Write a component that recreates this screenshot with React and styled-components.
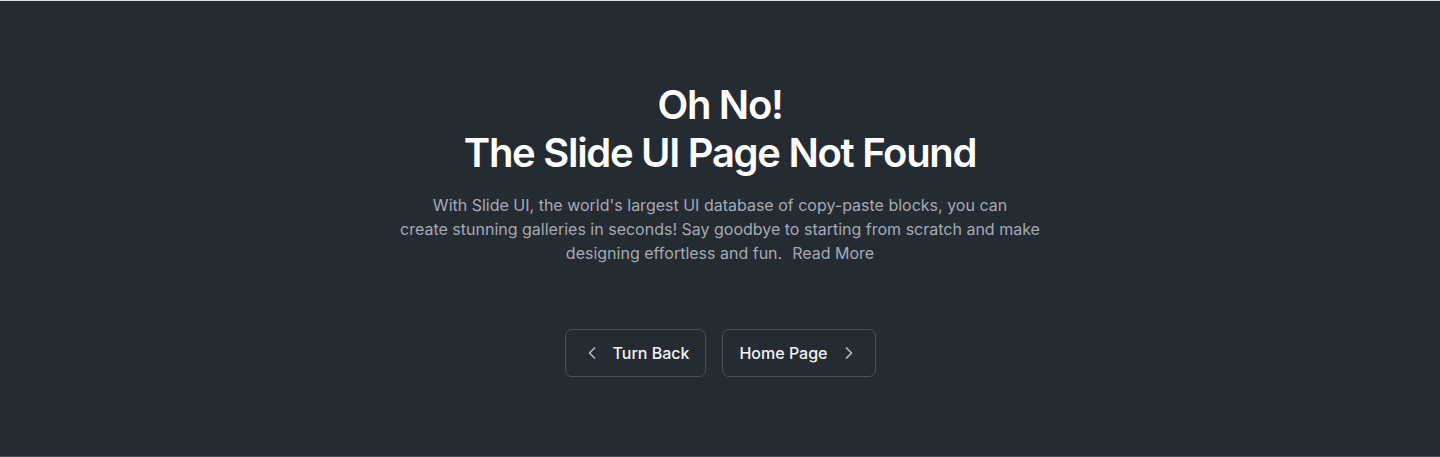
import React from 'react';
import styled, { createGlobalStyle } from 'styled-components';
import { ChevronLeft, ChevronRight } from 'lucide-react';

const GlobalStyle = createGlobalStyle`
  * {
    box-sizing: border-box;
  }

  body {
    margin: 0;
    background: #252b33;
    font-family: Inter, "Noto Sans", sans-serif;
    -webkit-font-smoothing: antialiased;
  }
`

const StyledSection = styled.section`
  display: flex;
  align-items: center;
  justify-content: center;
  height: 457px;
  background: #252b33;
  border-top: 1px solid #d9dce1;
  border-bottom: 1px solid #4a5059;
`

const StyledContent = styled.div`
  display: flex;
  flex-direction: column;
  align-items: center;
  max-width: 672px;
  text-align: center;
`

const StyledTitle = styled.h1`
  margin: 0;
  font-size: 40px;
  line-height: 48px;
  font-weight: 600;
  letter-spacing: -1.3px;
  color: #ffffff;
`

const StyledText = styled.p`
  max-width: 660px;
  margin: 16px 0 0;
  font-size: 16px;
  line-height: 24px;
  color: #a4aab3;
`

const StyledLink = styled.a`
  display: inline-block;
  margin-left: 10px;
  color: inherit;
  text-decoration: none;
`

const StyledActions = styled.div`
  display: flex;
  gap: 16px;
  margin-top: 64px;
`

const StyledButton = styled.button`
  display: inline-flex;
  align-items: center;
  gap: 11px;
  height: 48px;
  padding: 0 16px;
  background: transparent;
  border: 1px solid #48505b;
  border-radius: 7px;
  color: #f1f3f5;
  font-family: inherit;
  font-size: 16px;
  font-weight: 500;
  cursor: pointer;

  svg {
    color: #b4b9c0;
  }

  &:hover {
    background: #2c333c;
  }
`

function App() {
  return (
    <>
      <GlobalStyle />
      <StyledSection>
        <StyledContent>
          <StyledTitle>
            Oh No!
            <br />
            The Slide UI Page Not Found
          </StyledTitle>
          <StyledText>
            With Slide UI, the world's largest UI database of copy-paste blocks, you can
            <br />
            create stunning galleries in seconds! Say goodbye to starting from scratch and
            make designing effortless and fun.<StyledLink href="#">Read More</StyledLink>
          </StyledText>
          <StyledActions>
            <StyledButton>
              <ChevronLeft size={20} />
              Turn Back
            </StyledButton>
            <StyledButton>
              Home Page
              <ChevronRight size={20} />
            </StyledButton>
          </StyledActions>
        </StyledContent>
      </StyledSection>
    </>
  );
}

export default App;
